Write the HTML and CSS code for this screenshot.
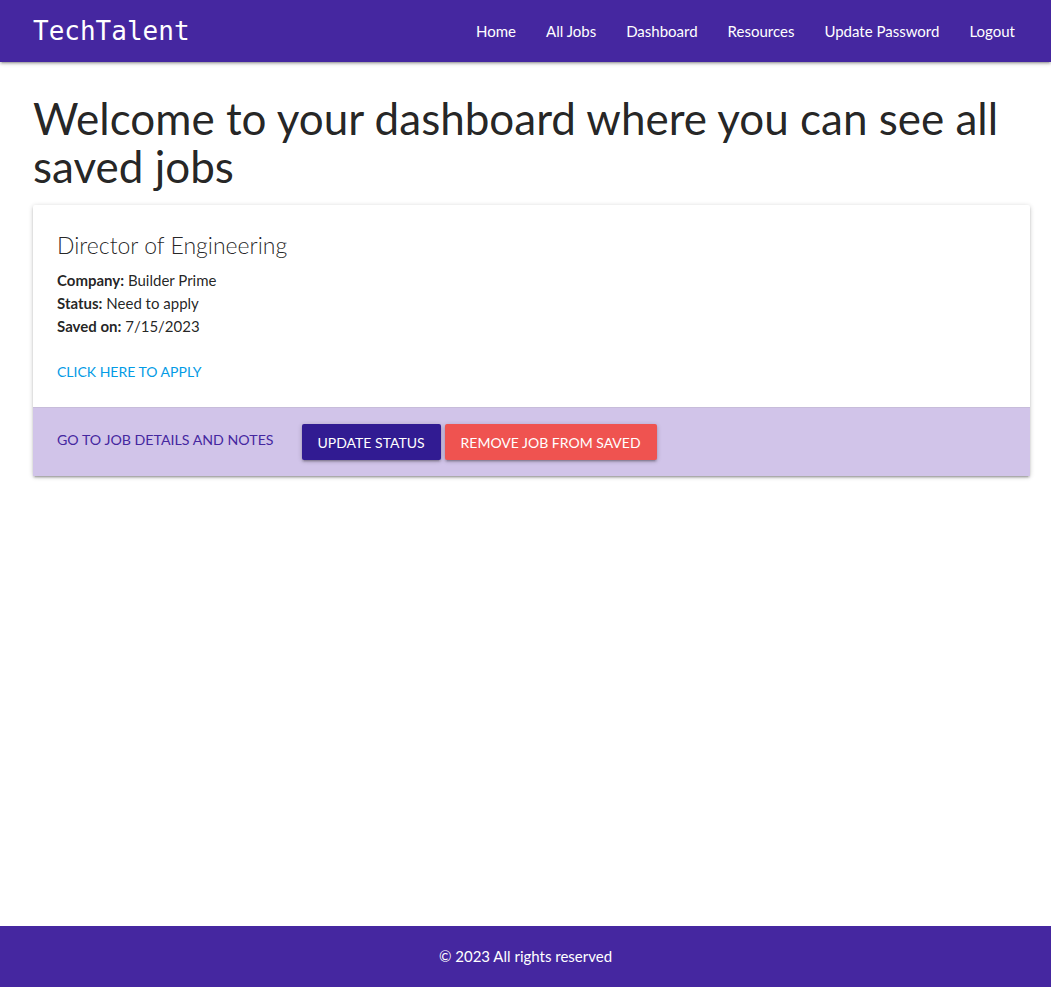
FILE: index.html
```html
<!DOCTYPE html>
<html lang="en">
<head>
<meta charset="utf-8">
<title>TechTalent</title>
<link rel="stylesheet" href="styles.css">
</head>
<body>
<div class="page">
  <nav class="nav">
    <div class="container nav-inner">
      <a class="brand" href="#">TechTalent</a>
      <ul class="nav-links">
        <li><a href="#">Home</a></li>
        <li><a href="#">All Jobs</a></li>
        <li><a href="#">Dashboard</a></li>
        <li><a href="#">Resources</a></li>
        <li><a href="#">Update Password</a></li>
        <li><a href="#">Logout</a></li>
      </ul>
    </div>
  </nav>
  <main class="container main">
    <h3 class="title">Welcome to your dashboard where you can see all saved jobs</h3>
    <div class="card">
      <div class="card-content">
        <span class="card-title">Director of Engineering</span>
        <p><b>Company:</b> Builder Prime</p>
        <p><b>Status:</b> Need to apply</p>
        <p><b>Saved on:</b> 7/15/2023</p>
        <p class="apply"><a href="#">Click here to apply</a></p>
      </div>
      <div class="card-action">
        <a class="details" href="#">Go to job details and notes</a>
        <button class="btn btn-dark">Update Status</button>
        <button class="btn btn-red">Remove Job From Saved</button>
      </div>
    </div>
  </main>
  <footer class="footer">© 2023 All rights reserved</footer>
</div>
</body>
</html>
```
FILE: styles.css
```css
* { box-sizing: border-box; }
html, body { margin: 0; padding: 0; }
body {
  font-family: "Segoe UI", Lato, sans-serif;
  font-size: 15px;
  line-height: 1.5;
  color: rgba(0,0,0,0.87);
  background: #fff;
}
a { text-decoration: none; }
.page {
  min-height: 100vh;
  display: flex;
  flex-direction: column;
}
.container {
  margin-left: 33px;
  width: 997px;
}
.nav {
  background: #4527a0;
  height: 62px;
  box-shadow: 0 2px 2px 0 rgba(0,0,0,0.14), 0 3px 1px -2px rgba(0,0,0,0.12), 0 1px 5px 0 rgba(0,0,0,0.2);
  position: relative;
  z-index: 2;
}
.nav-inner {
  display: flex;
  align-items: center;
  justify-content: space-between;
  height: 62px;
}
.brand {
  font-family: "DejaVu Sans Mono", monospace;
  font-size: 26px;
  color: #fff;
  line-height: 62px;
}
.nav-links {
  list-style: none;
  margin: 0;
  padding: 0;
  display: flex;
}
.nav-links a {
  display: block;
  padding: 0 15px;
  color: #fff;
  font-size: 15px;
  line-height: 58px;
}
.main { flex: 1; }
.title {
  font-size: 44px;
  font-weight: 400;
  line-height: 47.5px;
  margin: 33px 0 15px;
}
.card {
  background: #fff;
  border-radius: 2px;
  box-shadow: 0 2px 2px 0 rgba(0,0,0,0.14), 0 3px 1px -2px rgba(0,0,0,0.12), 0 1px 5px 0 rgba(0,0,0,0.2);
}
.card-content { padding: 24px; }
.card-title {
  display: block;
  font-size: 23px;
  font-weight: 300;
  line-height: 32px;
  margin-bottom: 8px;
}
.card-content p { margin: 0; line-height: 23px; }
.card-content p.apply { margin-top: 22px; }
.apply a { color: #039be5; text-transform: uppercase; font-size: 14px; }
.card-action {
  background: #d1c4e9;
  border-top: 1px solid rgba(160,160,160,0.2);
  padding: 16px 24px;
  display: flex;
  align-items: center;
}
.details {
  color: #4527a0;
  text-transform: uppercase;
  font-size: 14.2px;
  margin-right: 28px;
  margin-top: -4px;
}
.btn {
  border: none;
  border-radius: 2px;
  height: 36px;
  padding: 0 16px;
  font-family: inherit;
  font-size: 14px;
  text-transform: uppercase;
  color: #fff;
  margin-right: 4px;
  box-shadow: 0 2px 2px 0 rgba(0,0,0,0.14), 0 3px 1px -2px rgba(0,0,0,0.12), 0 1px 5px 0 rgba(0,0,0,0.2);
}
.btn-dark { background: #311b92; }
.btn-red { background: #ef5350; }
.footer {
  background: #4527a0;
  color: #fff;
  height: 61px;
  display: flex;
  align-items: center;
  justify-content: center;
  font-size: 15px;
}
```
